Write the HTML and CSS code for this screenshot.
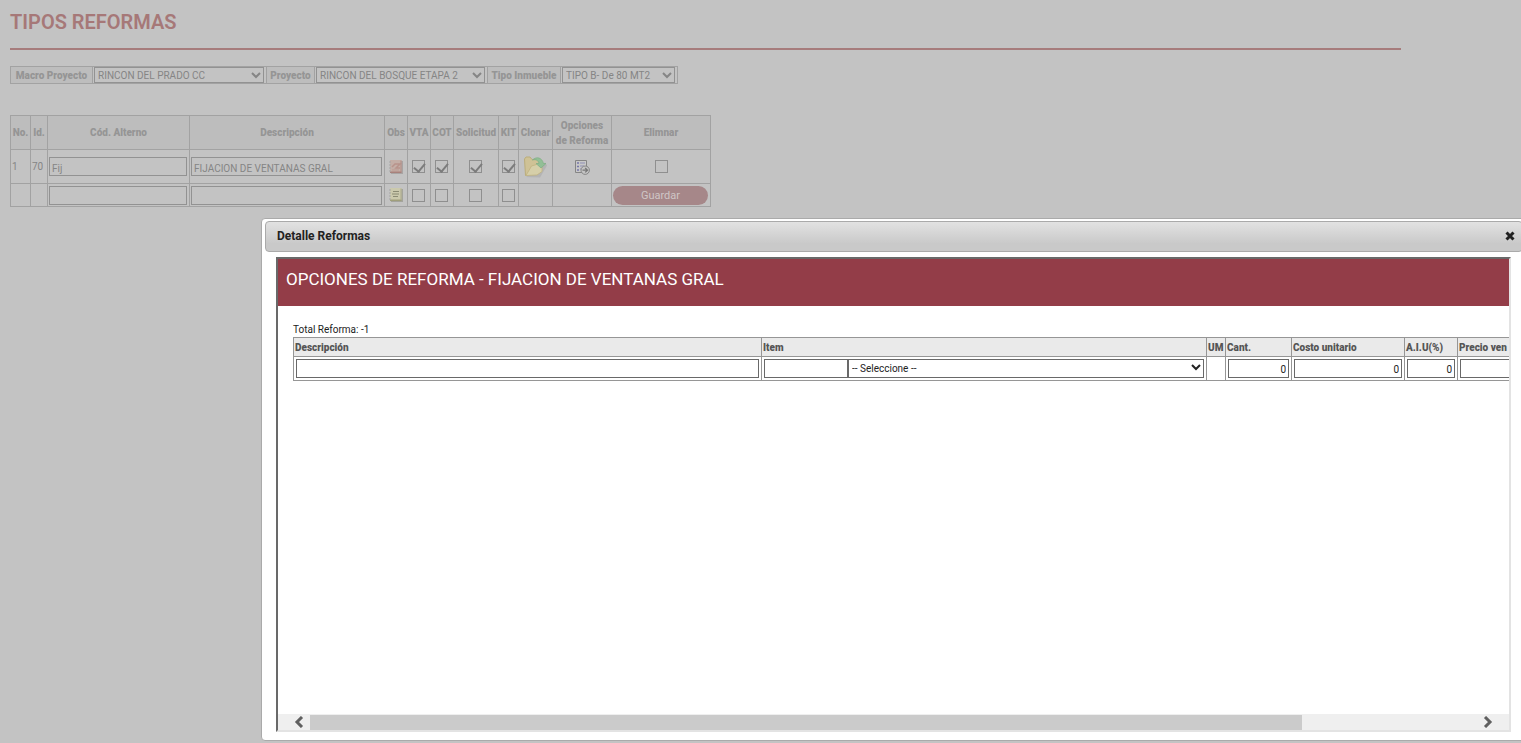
FILE: index.html
```
<!DOCTYPE html>
<html lang="es">
<head>
<meta charset="utf-8">
<title>Tipos Reformas</title>
<link rel="stylesheet" href="styles.css">
</head>
<body>
<main class="page">
  <h1 class="page-title">TIPOS REFORMAS</h1>
  <table class="grid filters">
    <colgroup><col class="w82"><col class="w174"><col class="w48"><col class="w173"><col class="w73"><col class="w117"></colgroup>
    <tr>
      <th><label for="macro">Macro Proyecto</label></th>
      <td><span class="select"><select id="macro"><option>RINCON DEL PRADO CC</option></select><svg viewBox="0 0 10 7"><path d="M1 1l4 4 4-4"/></svg></span></td>
      <th><label for="proyecto">Proyecto</label></th>
      <td><span class="select"><select id="proyecto"><option>RINCON DEL BOSQUE ETAPA 2</option></select><svg viewBox="0 0 10 7"><path d="M1 1l4 4 4-4"/></svg></span></td>
      <th><label for="tipo">Tipo Inmueble</label></th>
      <td><span class="select"><select id="tipo"><option>TIPO B- De 80 MT2</option></select><svg viewBox="0 0 10 7"><path d="M1 1l4 4 4-4"/></svg></span></td>
    </tr>
  </table>

  <table class="grid reforms">
    <colgroup><col class="w20"><col class="w17"><col class="w142"><col class="w195"><col class="w23"><col class="w23"><col class="w23"><col class="w45"><col class="w20"><col class="w34"><col class="w59"><col class="w99"></colgroup>
    <thead>
      <tr><th>No.</th><th>Id.</th><th>Cód. Alterno</th><th>Descripción</th><th>Obs</th><th>VTA</th><th>COT</th><th>Solicitud</th><th>KIT</th><th>Clonar</th><th>Opciones<br>de Reforma</th><th>Elimnar</th></tr>
    </thead>
    <tbody>
      <tr class="row-item">
        <td>1</td><td>70</td>
        <td><input class="text" type="text" aria-label="Cód. Alterno" value="Fij"></td>
        <td><input class="text" type="text" aria-label="Descripción" value="FIJACION DE VENTANAS GRAL"></td>
        <td class="mid"><button class="icon" aria-label="Observaciones"><svg width="16" height="16" viewBox="0 0 16 16"><path d="M3 2h12v13H3z" fill="#a8a4a3"/><path d="M2 1h11.500v12H2z" fill="#c4aea6"/><path d="M4 8l3-3h5l-4 4h4" stroke="#b8938b" fill="none" stroke-width="1.500"/><path d="M4 11h7" stroke="#bb9b93"/><path d="M2 12.500h11.500V14H2z" fill="#a8817b"/><path d="M13 1.500V13" stroke="#b18e87"/><path d="M1 3h2M1 6h2M1 9h2M1 12h2" stroke="#a5a5a5"/></svg></button></td>
        <td class="mid"><input type="checkbox" aria-label="VTA" checked></td>
        <td class="mid"><input type="checkbox" aria-label="COT" checked></td>
        <td class="mid"><input type="checkbox" aria-label="Solicitud" checked></td>
        <td class="mid"><input type="checkbox" aria-label="KIT" checked></td>
        <td class="mid"><button class="icon" aria-label="Clonar"><svg width="26" height="24" viewBox="0 0 26 24"><path d="M4 22l14 .5 7-12-2-3z" fill="#aaa" opacity=".6"/><path d="M2.500 4l1.500-2h4l2 2.500h7.500v12L3.500 20.500z" fill="#cfc296" stroke="#bbad7b"/><path d="M4 20.500L9.500 11l5-1.500 2-2 3.500 1v8l-5 3.500z" fill="#d6cfa9" stroke="#c0b27f" stroke-width=".8"/><path d="M10.500 5c4-4 9.500-2.500 11 3.500h2.500L19 13l-5-4.500h3C16.500 5.500 14 4 10.500 5z" fill="#92bf96" stroke="#7fae84" stroke-width=".7"/></svg></button></td>
        <td class="mid"><button class="icon" aria-label="Opciones de Reforma"><svg width="16" height="16" viewBox="0 0 16 16"><path d="M1.500 1.500h11v12h-11z" fill="#c8c8c8" stroke="#858585"/><path d="M3 4h2M3 7.500h2M3 11h2" stroke="#7777a8" stroke-width="1.500"/><path d="M6 4h5M6 7h4M6 10h2" stroke="#8f8fb5"/><circle cx="11.200" cy="11.200" r="4.200" fill="#c4c4c4" stroke="#858585"/><path d="M8.500 11.200h5M11.200 9l2.300 2.200-2.300 2.200" fill="none" stroke="#777" stroke-width="1.300"/></svg></button></td>
        <td class="mid"><input type="checkbox" aria-label="Eliminar"></td>
      </tr>
      <tr class="row-new">
        <td></td><td></td>
        <td><input class="text" type="text" aria-label="Nuevo Cód. Alterno"></td>
        <td><input class="text" type="text" aria-label="Nueva Descripción"></td>
        <td class="mid"><button class="icon" aria-label="Nueva observación"><svg width="16" height="16" viewBox="0 0 16 16"><path d="M3 2h12v13H3z" fill="#a4a49c"/><path d="M2 1h11.500v12H2z" fill="#cbc9ad"/><path d="M5 4.500h6M4 7h7M5 9.500h5" stroke="#8b8b74" stroke-width="1.200"/><path d="M2 12.500h11.500V14H2z" fill="#a09f7c"/><path d="M13 1.500V13" stroke="#aaa88a"/><path d="M1 3h2M1 6h2M1 9h2M1 12h2" stroke="#a5a5a5"/></svg></button></td>
        <td class="mid"><input type="checkbox" aria-label="VTA nuevo"></td>
        <td class="mid"><input type="checkbox" aria-label="COT nuevo"></td>
        <td class="mid"><input type="checkbox" aria-label="Solicitud nuevo"></td>
        <td class="mid"><input type="checkbox" aria-label="KIT nuevo"></td>
        <td></td><td></td>
        <td><button class="save">Guardar</button></td>
      </tr>
    </tbody>
  </table>
</main>

<section class="dialog" role="dialog" aria-labelledby="dialog-title">
  <header class="dialog-bar">
    <h2 id="dialog-title">Detalle Reformas</h2>
    <button class="icon close" aria-label="Cerrar"><svg width="10" height="10" viewBox="0 0 10 10"><path d="M1.500 1.500l7 7M8.500 1.500l-7 7" stroke="#222" stroke-width="3"/></svg></button>
  </header>
  <div class="frame">
    <h3 class="banner">OPCIONES DE REFORMA - FIJACION DE VENTANAS GRAL</h3>
    <div class="detail">
      <p class="total">Total Reforma: -1</p>
      <table class="grid items">
        <colgroup><col class="w468"><col class="w445"><col class="w19"><col class="w66"><col class="w113"><col class="w53"><col class="w117"></colgroup>
        <tr><th>Descripción</th><th>Item</th><th>UM</th><th>Cant.</th><th>Costo unitario</th><th>A.I.U(%)</th><th>Precio ven</th></tr>
        <tr>
          <td><input class="text" type="text" aria-label="Descripción del item"></td>
          <td><div class="pair"><input class="text code" type="text" aria-label="Código de item"><span class="select"><select aria-label="Item"><option>-- Seleccione --</option></select><svg viewBox="0 0 10 7"><path d="M1 1l4 4 4-4"/></svg></span></div></td>
          <td></td>
          <td><input class="text num" type="text" aria-label="Cantidad" value="0"></td>
          <td><input class="text num" type="text" aria-label="Costo unitario" value="0"></td>
          <td><input class="text num" type="text" aria-label="A.I.U" value="0"></td>
          <td><input class="text num" type="text" aria-label="Precio"></td>
        </tr>
      </table>
    </div>
    <div class="scroll">
      <button class="icon arrow" aria-label="Desplazar a la izquierda"><svg width="10" height="12" viewBox="0 0 10 12"><path d="M8 1L3 6l5 5"/></svg></button>
      <div class="track"><div class="thumb"></div></div>
      <button class="icon arrow" aria-label="Desplazar a la derecha"><svg width="10" height="12" viewBox="0 0 10 12"><path d="M2 1l5 5-5 5"/></svg></button>
    </div>
  </div>
</section>
</body>
</html>
```
FILE: styles.css
```
* { box-sizing: border-box; }
body {
  margin: 0;
  min-height: 100vh;
  overflow: hidden;
  background: #c3c3c3;
  color: #858585;
  font: 10px/15px Roboto, "Liberation Sans", sans-serif;
}
input, select, button { font: inherit; color: inherit; margin: 0; }
h1, h2, h3, p { margin: 0; }

.page { padding: 10px 120px 0 10px; }
.page-title {
  height: 40px;
  margin-bottom: 16px;
  border-bottom: 2px solid #a67c7c;
  color: #a67878;
  font-size: 20px;
  line-height: 24px;
  font-weight: 600;
}

.grid { border-collapse: collapse; table-layout: fixed; width: 0; }
.grid th, .grid td { border: 1px solid #a2a2a2; padding: 0 1px; }
.grid th { background: #bdbdbd; color: #959595; font-weight: 900; white-space: nowrap; }
.filters td, .filters th { height: 17px; }
.filters th { padding: 0 1px; }
.filters td { padding: 0 2px 0 1px; }
.reforms { margin-top: 31px; }
.reforms thead th { height: 34px; padding: 0; }
.reforms .row-item td { height: 34px; }
.reforms .row-new td { height: 23px; }
.reforms td { padding: 0 2px 0 1px; }
.reforms .mid { padding: 0 1px 0 0; text-align: center; }

.w17 { width: 17px; }
.w19 { width: 19px; }
.w20 { width: 20px; }
.w23 { width: 23px; }
.w34 { width: 34px; }
.w45 { width: 45px; }
.w48 { width: 48px; }
.w53 { width: 53px; }
.w59 { width: 59px; }
.w66 { width: 66px; }
.w73 { width: 73px; }
.w82 { width: 82px; }
.w99 { width: 99px; }
.w113 { width: 113px; }
.w117 { width: 117px; }
.w142 { width: 142px; }
.w173 { width: 173px; }
.w174 { width: 174px; }
.w195 { width: 195px; }
.w445 { width: 445px; }
.w468 { width: 468px; }

.text {
  display: block;
  width: 100%;
  height: 19px;
  padding: 4px 2px 0;
  border: 1px solid #929292;
  border-radius: 0;
  background: transparent;
  outline: 0;
}
.select { display: block; position: relative; flex: 1; }
.select select {
  display: block;
  appearance: none;
  width: 100%;
  height: 16px;
  padding: 1px 3px 0;
  border: 1px solid #929292;
  border-radius: 0;
  background: transparent;
  line-height: 14px;
}
.select svg {
  position: absolute;
  right: 3px;
  top: 5px;
  width: 10px;
  height: 7px;
  fill: none;
  stroke: currentColor;
  stroke-width: 2;
  pointer-events: none;
}
input[type="checkbox"] {
  appearance: none;
  display: block;
  width: 13px;
  height: 13px;
  margin: 0 auto;
  border: 1px solid #8f8f8f;
}
input[type="checkbox"]:checked::before {
  content: "";
  display: block;
  width: 5px;
  height: 9px;
  margin: 0 0 0 3px;
  border: solid #7c7c7c;
  border-width: 0 2px 2px 0;
  transform: rotate(40deg);
}
.icon {
  display: flex;
  align-items: center;
  justify-content: center;
  width: 100%;
  padding: 0;
  border: 0;
  background: none;
}
.icon svg { flex: none; }
.save {
  display: block;
  width: 95px;
  height: 19px;
  padding: 0;
  border: 0;
  border-radius: 10px;
  background: #a68789;
  color: #cfc6c6;
  font-size: 11px;
}
.reforms td:last-child { padding: 0 1px; }

.dialog {
  position: absolute;
  inset: 218px -6px 2px 261px;
  display: flex;
  flex-direction: column;
  padding: 2px 3px 8px;
  border: 1px solid #aaa;
  border-radius: 4px;
  background: #fff;
  color: #222;
}
.dialog-bar {
  display: flex;
  align-items: center;
  justify-content: space-between;
  height: 31px;
  padding: 0 7px 1px 11px;
  border: 1px solid #aaa;
  border-radius: 4px;
  background: linear-gradient(#e2e2e2, #c9c9c9 75%);
}
.dialog-bar h2 { font-size: 12px; line-height: 16px; font-weight: 700; }
.close { width: 10px; }
.frame {
  flex: 1;
  min-height: 0;
  display: flex;
  flex-direction: column;
  margin: 5px 12px 0 11px;
  border: 2px solid #e3e3e3;
  border-top-color: #696969;
  border-left-color: #696969;
  overflow: hidden;
}
.banner {
  height: 47px;
  padding: 8px;
  background: #933d48;
  color: #fff;
  font-size: 17px;
  line-height: 24px;
  font-weight: 400;
  white-space: nowrap;
}
.detail { flex: 1; min-height: 0; padding: 16px 0 0 15px; overflow: hidden; }
.items th, .items td { border-color: #969696; }
.items th { height: 19px; background: #eaeaea; color: #555; text-align: left; }
.items td { height: 24px; padding: 0 2px 1px; }
.items .text { height: 19px; padding-top: 3px; border-color: #696969; }
.items select { height: 19px; border-color: #696969; }
.num { text-align: right; }
.pair { display: flex; }
.pair .code { width: 84px; }
.scroll { display: flex; height: 16px; padding: 0 10px; background: #efefef; }
.arrow { width: 22px; }
.arrow svg { fill: none; stroke: #606060; stroke-width: 3; }
.track { flex: 1; padding-top: 1px; }
.thumb { width: 85%; height: 15px; background: #cbcbcb; }
```
